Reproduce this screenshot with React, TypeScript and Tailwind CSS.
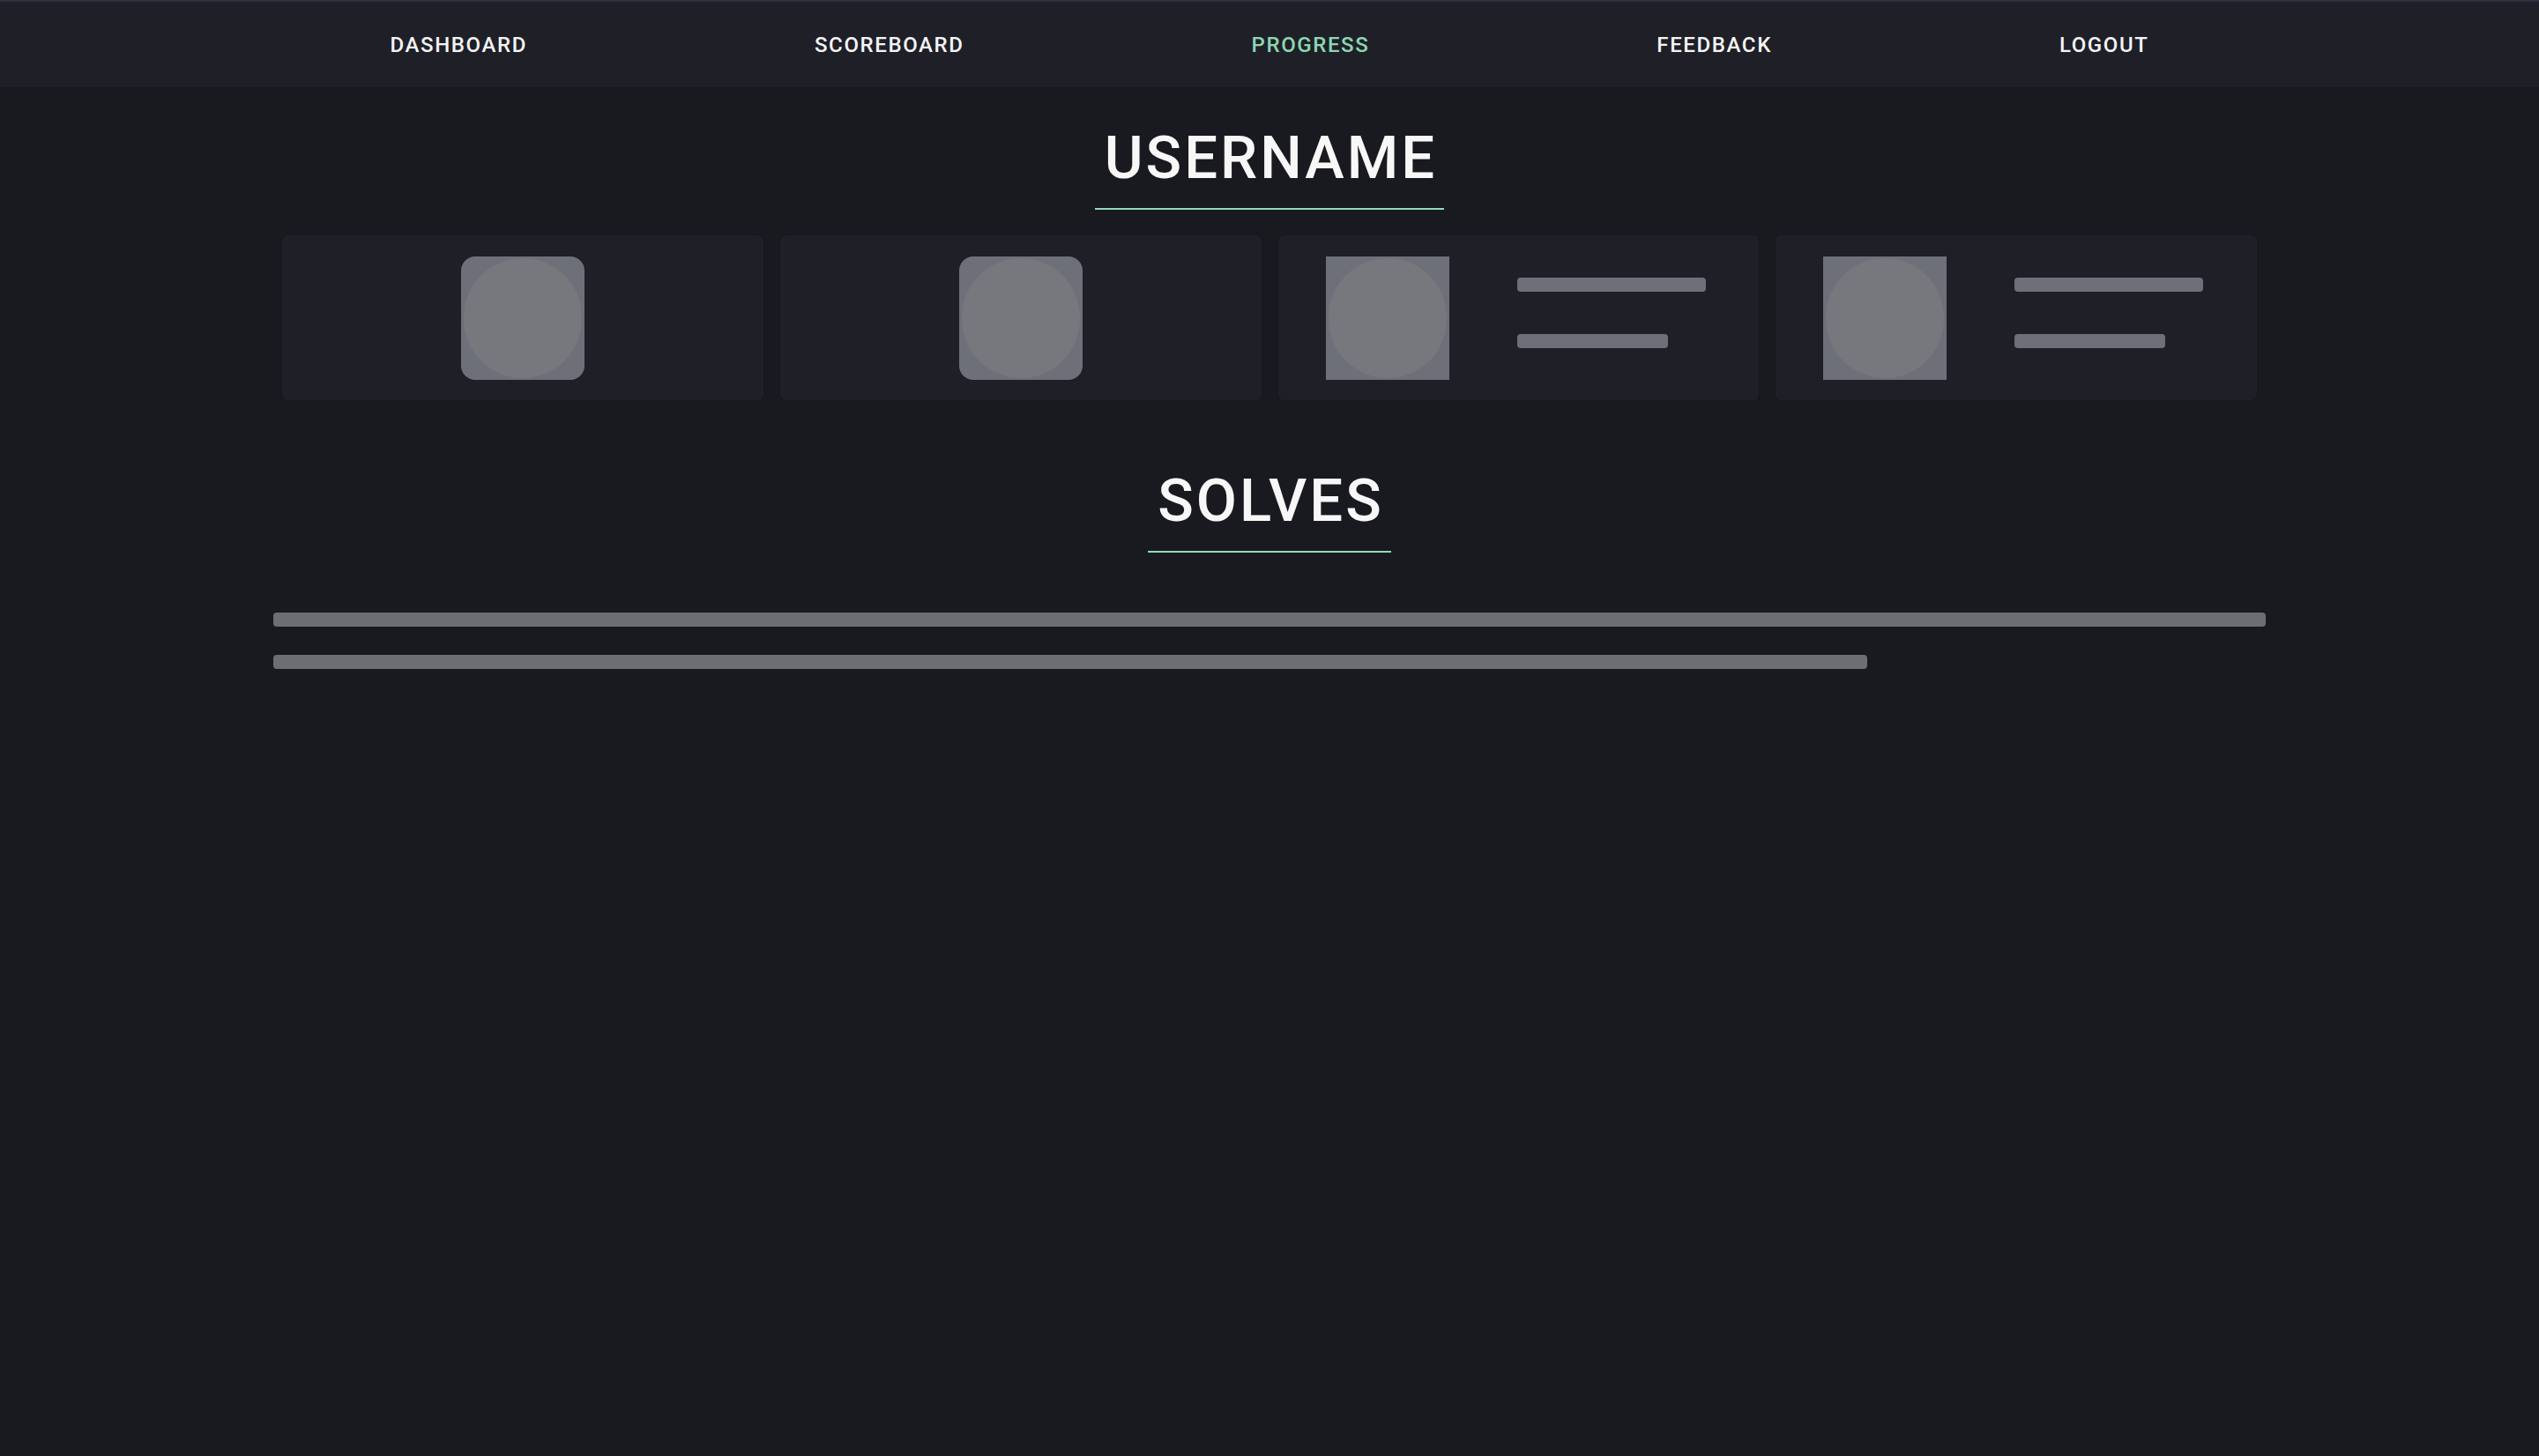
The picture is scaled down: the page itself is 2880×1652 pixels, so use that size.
import React from "react";

const FONT = { fontFamily: "Roboto, 'Liberation Sans', sans-serif" };

function Avatar({ rounded }: { rounded: boolean }) {
  return (
    <div
      className={`w-[140px] h-[140px] shrink-0 bg-[#6e7079] flex items-center justify-center overflow-hidden ${
        rounded ? "rounded-[16px]" : ""
      }`}
    >
      <div className="w-[134px] h-[136px] rounded-full bg-[#77787d]" />
    </div>
  );
}

function Heading({ children }: { children: React.ReactNode }) {
  return (
    <div className="flex justify-center">
      <h1
        className="inline-block pl-[11px] pr-[8px] pb-[23px] border-b-2 border-[#8fdcb6] text-[67px] leading-[67px] font-medium tracking-[3px] text-[#f7f7f7]"
        style={FONT}
      >
        {children}
      </h1>
    </div>
  );
}

export default function App() {
  const nav = ["DASHBOARD", "SCOREBOARD", "PROGRESS", "FEEDBACK", "LOGOUT"];
  return (
    <div className="min-h-[1652px] bg-[#191920]">
      <nav className="h-[99px] border-t-2 border-[#2f3240] bg-[#1f1f28] flex items-center justify-center gap-[326px]">
        {nav.map((n) => (
          <a
            key={n}
            className={`text-[24px] leading-[24px] font-medium tracking-[1.6px] ${
              n === "PROGRESS" ? "text-[#8cd6b1]" : "text-[#f4f4f4]"
            }`}
            style={FONT}
          >
            {n}
          </a>
        ))}
      </nav>
      <main className="w-[2240px] mx-auto pt-[47px]">
        <Heading>USERNAME</Heading>
        <div className="grid grid-cols-4 gap-[19px] mt-[29px]">
          {[0, 1].map((i) => (
            <div key={i} className="h-[187px] rounded-md bg-[#1f1f28] shadow-[0_0_2px_rgba(0,0,0,0.25)] flex items-center justify-center">
              <Avatar rounded />
            </div>
          ))}
          {[2, 3].map((i) => (
            <div key={i} className="h-[187px] rounded-md bg-[#1f1f28] shadow-[0_0_2px_rgba(0,0,0,0.25)] flex items-center pl-[54px] gap-[77px]">
              <Avatar rounded={false} />
              <div className="flex flex-col gap-[48px] mb-[12px]">
                <div className="w-[214px] h-[16px] rounded-[4px] bg-[#6e7079]" />
                <div className="w-[171px] h-[16px] rounded-[4px] bg-[#6e7079]" />
              </div>
            </div>
          ))}
        </div>
        <div className="mt-[81px]">
          <Heading>SOLVES</Heading>
        </div>
        <div className="-mx-[10px] mt-[68px] flex flex-col gap-[32px]">
          <div className="w-full h-[16px] rounded-[4px] bg-[#6d6e72]" />
          <div className="w-[80%] h-[16px] rounded-[4px] bg-[#6d6e72]" />
        </div>
      </main>
    </div>
  );
}
